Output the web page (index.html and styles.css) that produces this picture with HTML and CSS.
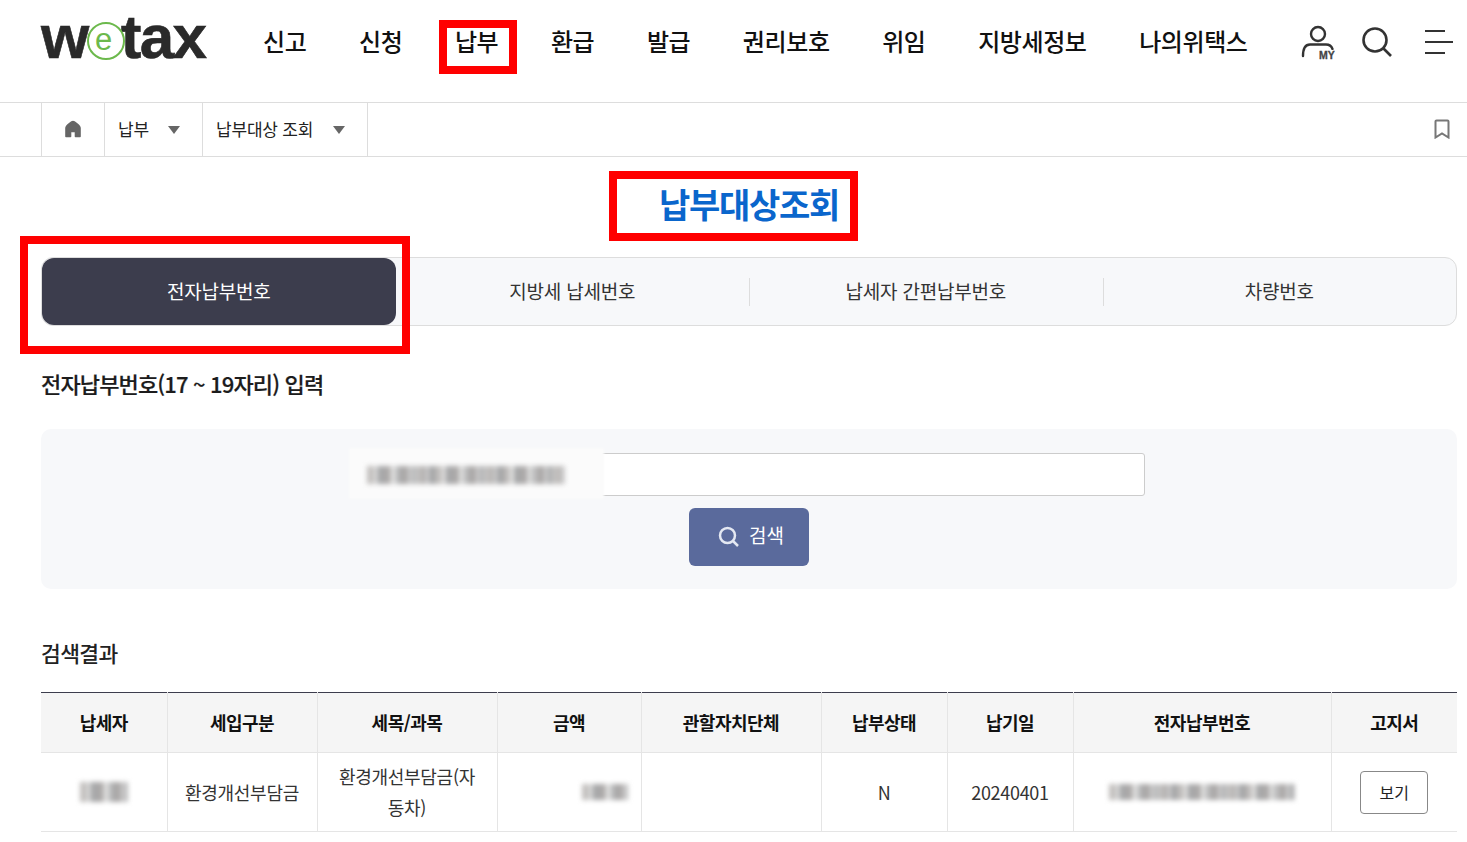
FILE: index.html
```html
<!DOCTYPE html>
<html lang="ko">
<head>
<meta charset="utf-8">
<title>납부대상조회 - wetax</title>
<link rel="stylesheet" href="styles.css">
</head>
<body>
<header class="header">
  <div class="logo">w<span class="logo-e">e</span>tax</div>
  <nav class="nav">
    <a>신고</a><a>신청</a><a>납부</a><a>환급</a><a>발급</a><a>권리보호</a><a>위임</a><a>지방세정보</a><a>나의위택스</a>
  </nav>
  <div class="header-icons">
    <span class="my-icon">
      <svg width="36" height="36" viewBox="0 0 36 36" fill="none" stroke="#333" stroke-width="2.400" stroke-linecap="round"><circle cx="17" cy="10" r="7"/><path d="M2 32C2 24 4 20.500 9 20.500H25C28 20.500 30.500 22 31.500 25"/></svg>
      <b class="my-label">MY</b>
    </span>
    <svg class="search-icon" width="32" height="32" viewBox="0 0 32 32" fill="none" stroke="#333" stroke-width="2.600"><circle cx="14" cy="14" r="11.500"/><path d="M22.500 22.500 30 30"/></svg>
    <span class="menu-icon"><i></i><i></i><i></i></span>
  </div>
</header>
<div class="crumbs">
  <div class="crumb crumb-home">
    <svg width="18" height="18" viewBox="0 0 18 18" fill="#666" stroke="#666" stroke-width="1.600" stroke-linejoin="round"><path d="M9 1.500C10 1.500 16 5.500 16 8V16.500H11.500V11.500H6.500V16.500H2V8C2 5.500 8 1.500 9 1.500z"/></svg>
  </div>
  <div class="crumb crumb-a">납부<span class="caret"></span></div>
  <div class="crumb crumb-b">납부대상 조회<span class="caret"></span></div>
  <svg class="bookmark" width="16" height="20" viewBox="0 0 16 20" fill="none" stroke="#777" stroke-width="2"><path d="M2.500 1.500h11a1 1 0 0 1 1 1v16L8 14.500 1.500 18.500v-16a1 1 0 0 1 1-1z"/></svg>
</div>
<main class="main">
  <h1 class="title">납부대상조회</h1>
  <div class="tabs">
    <div class="tab tab-active">전자납부번호</div>
    <div class="tab">지방세 납세번호</div>
    <div class="tab tab-sep">납세자 간편납부번호</div>
    <div class="tab tab-sep">차량번호</div>
  </div>
  <h2 class="subhead">전자납부번호(17 ~ 19자리) 입력</h2>
  <section class="panel">
    <div class="field">
      <div class="halo"></div>
      <div class="redact redact-input"></div>
    </div>
    <button class="search-btn">
      <svg width="22" height="22" viewBox="0 0 22 22" fill="none" stroke="#e4e8f2" stroke-width="2.500"><circle cx="9.500" cy="9.500" r="7.500"/><path d="m15 15 5 5"/></svg>
      검색
    </button>
  </section>
  <h2 class="result-head">검색결과</h2>
  <table class="table">
    <colgroup>
      <col class="c1"><col class="c2"><col class="c3"><col class="c4"><col class="c5"><col class="c6"><col class="c7"><col class="c8"><col class="c9">
    </colgroup>
    <thead>
      <tr><th>납세자</th><th>세입구분</th><th>세목/과목</th><th>금액</th><th>관할자치단체</th><th>납부상태</th><th>납기일</th><th>전자납부번호</th><th>고지서</th></tr>
    </thead>
    <tbody>
      <tr>
        <td><div class="redact redact-name"></div></td>
        <td>환경개선부담금</td>
        <td class="wrap">환경개선부담금(자동차)</td>
        <td class="right"><div class="redact redact-amount"></div></td>
        <td></td>
        <td>N</td>
        <td>20240401</td>
        <td><div class="redact redact-number"></div></td>
        <td><button class="view-btn">보기</button></td>
      </tr>
    </tbody>
  </table>
</main>
<div class="mark mark-nav"></div>
<div class="mark mark-title"></div>
<div class="mark mark-tab"></div>
</body>
</html>
```
FILE: styles.css
```css
* { box-sizing: border-box; }
html, body { margin: 0; padding: 0; background: #fff; }
body { font-family: "Noto Sans CJK KR", "Noto Sans", sans-serif; color: #222; overflow-x: hidden; }
h1, h2 { margin: 0; }

.header { height: 103px; border-bottom: 1px solid #ddd; display: flex; align-items: flex-start; padding-left: 41px; }
.logo { width: 222px; margin-top: 2px; font-family: "Liberation Sans", sans-serif; font-weight: 700; font-size: 62px; line-height: 70px; letter-spacing: -1.600px; color: #2a2a2a; -webkit-text-stroke: 0.6px #2a2a2a; white-space: nowrap; }
.logo-e { position: relative; display: inline-block; width: 34px; font-weight: 400; font-size: 31px; line-height: 20px; letter-spacing: 0; color: #6cb94c; -webkit-text-stroke: 0; text-align: center; vertical-align: 8px; margin: 0 0 0 -1px; }
.logo-e::before { content: ""; position: absolute; left: 0; top: -8px; width: 34px; height: 34px; border: 2.500px solid #6cb94c; border-radius: 50%; }
.nav { display: flex; gap: 52.600px; margin-top: 22px; font-size: 24px; line-height: 38px; font-weight: 500; color: #111; letter-spacing: -0.4px; white-space: nowrap; }
.header-icons { position: relative; display: flex; align-items: center; margin: 24px 0 0 53.500px; height: 36px; }
.my-icon { position: relative; display: block; width: 36px; height: 36px; }
.my-label { position: absolute; left: 17px; top: 26px; font-family: "Liberation Sans", sans-serif; font-size: 10.500px; line-height: 10px; font-weight: 700; color: #444; background: #fff; padding: 0 0 0 1px; -webkit-text-stroke: 0.3px #444; }
.search-icon { margin-left: 24px; }
.menu-icon { display: flex; flex-direction: column; gap: 9px; width: 28px; margin-left: 32px; }
.menu-icon i { display: block; height: 2px; background: #333; width: 20px; }
.menu-icon i:nth-child(2) { width: 28px; }

.crumbs { height: 54px; border-bottom: 1px solid #ddd; display: flex; padding-left: 41px; align-items: stretch; font-size: 17px; letter-spacing: -0.2px; line-height: 50px; color: #222; }
.crumb { display: flex; align-items: center; border-left: 1px solid #ddd; padding-bottom: 2px; }
.crumb-home { width: 63px; justify-content: center; }
.crumb-a { width: 98px; padding-left: 13px; }
.crumb-b { width: 166px; padding-left: 13px; border-right: 1px solid #ddd; }
.caret { width: 0; height: 0; border: 6.500px solid transparent; border-top: 8px solid #666; border-bottom: 0; margin: 3px 0 0 19px; }
.crumb-b .caret { margin-left: 20px; }
.bookmark { align-self: center; margin: 0 17px 2px auto; }

.main { padding: 0 10px 0 41px; }
.title { text-align: center; font-size: 34px; line-height: 50px; font-weight: 700; color: #0a66cc; letter-spacing: -1.300px; padding-top: 22px; height: 100px; }
.tabs { display: grid; grid-template-columns: repeat(4, 1fr); height: 69px; background: #f7f8fa; border: 1px solid #ddd; border-radius: 12px; }
.tab { position: relative; display: flex; align-items: center; justify-content: center; font-size: 19px; line-height: 28px; padding-bottom: 2px; color: #333; letter-spacing: -0.2px; }
.tab-active { background: #3c3d4d; color: #fff; border-radius: 12px; margin: 0; }
.tab-sep::before { content: ""; position: absolute; left: 0; top: 20px; height: 28px; border-left: 1px solid #ddd; }
.subhead { margin-top: 40px; font-size: 22px; line-height: 34px; font-weight: 500; color: #1c1c1c; letter-spacing: -0.850px; -webkit-text-stroke: 0.2px #1c1c1c; }
.panel { margin-top: 29px; height: 160px; background: #f7f8fa; border-radius: 10px; padding-top: 24px; display: flex; flex-direction: column; align-items: center; }
.field { position: relative; width: 792px; height: 43px; background: #fff; border: 1px solid #ccc; border-radius: 3px; }
.halo { position: absolute; left: -5px; top: -6px; width: 255px; height: 51px; background: #fbfbfb; filter: blur(1px); }
.redact { filter: blur(2.500px); background:
  repeating-linear-gradient(90deg, rgba(150,145,142,.35) 0 7px, rgba(255,255,255,.3) 7px 11px, rgba(120,125,130,.25) 11px 17px),
  repeating-linear-gradient(90deg, rgba(255,255,255,.3) 0 9px, rgba(130,130,135,.25) 9px 23px),
  #c8c7c6; }
.redact-input { position: absolute; left: 13px; top: 12px; width: 198px; height: 18px; }
.search-btn { margin-top: 12px; width: 120px; height: 58px; background: #5a6a9c; color: #fff; border: 0; border-radius: 6px; font-family: inherit; font-size: 19px; line-height: 28px; display: flex; align-items: center; justify-content: center; gap: 9px; padding: 0 0 5px 4px; }
.search-btn svg { margin-top: 5px; }
.result-head { margin-top: 47px; font-size: 21.500px; line-height: 34px; font-weight: 500; letter-spacing: -0.600px; color: #222; }
.table { margin-top: 22px; width: 100%; border-collapse: collapse; table-layout: fixed; border-top: 1px solid #3c3d4d; font-size: 18px; }
.c1 { width: 126px; } .c2 { width: 150px; } .c3 { width: 180px; } .c4 { width: 144px; } .c5 { width: 180px; } .c6 { width: 126px; } .c7 { width: 126px; } .c8 { width: 258px; } .c9 { width: 126px; }
.table th, .table td { border: 1px solid #e5e5e5; border-top: 0; text-align: center; padding: 0 10px; color: #333; }
.table th:first-child, .table td:first-child { border-left: 0; }
.table th:last-child, .table td:last-child { border-right: 0; }
.table th { height: 60px; background: #f5f5f5; font-size: 18px; font-weight: 700; color: #111; letter-spacing: -0.5px; padding-bottom: 2px; }
.table td { height: 79px; line-height: 31px; letter-spacing: -0.3px; }
.table td.wrap { padding: 0 20px; }
.redact-name { width: 48px; height: 20px; margin: 0 auto; }
.right { text-align: right; }
.redact-amount { width: 46px; height: 16px; margin-left: auto; margin-right: 3px; }
.redact-number { width: 186px; height: 16px; margin: 0 auto; }
.view-btn { display: block; margin: 1px auto 0; width: 68px; height: 43px; background: #fff; border: 1px solid #888; border-radius: 4px; font-family: inherit; font-size: 16px; color: #222; padding: 0 0 2px; }

.mark { position: absolute; border: 8px solid #f00; pointer-events: none; }
.mark-nav { left: 439px; top: 20px; width: 78px; height: 54px; }
.mark-title { left: 609px; top: 171px; width: 249px; height: 70px; }
.mark-tab { left: 20px; top: 236px; width: 390px; height: 118px; }
```
